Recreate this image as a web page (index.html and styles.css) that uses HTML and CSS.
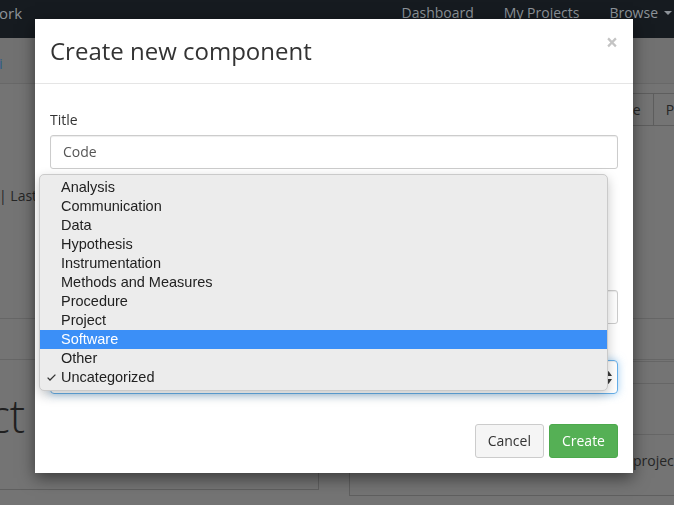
FILE: index.html
```html
<!DOCTYPE html>
<html lang="en">
<head>
<meta charset="utf-8">
<title>Create new component</title>
<link rel="stylesheet" href="styles.css">
</head>
<body>
<div class="page">
  <header class="navbar">
    <span class="brand">ork</span>
    <nav class="nav">
      <a class="nav-link">Dashboard</a>
      <a class="nav-link">My Projects</a>
      <a class="nav-link dd">Browse<span class="caret"></span></a>
    </nav>
  </header>
  <div class="subnav"><span class="sublink">i</span></div>
  <main class="main">
    <div class="tabs"><span class="tab">Source</span><span class="tab">Public</span></div>
    <div class="meta">| Last</div>
    <div class="band"></div>
    <div class="panels">
      <section class="panel-left"><div class="big">ct</div></section>
      <section class="panel-right">
        <div class="pr-head"></div>
        <div class="pr-sec"></div>
        <div class="pr-body">projec</div>
      </section>
    </div>
  </main>
</div>

<div class="modal-layer">
  <div class="modal">
    <div class="modal-header">
      <h4 class="modal-title">Create new component</h4>
      <span class="close">×</span>
    </div>
    <div class="modal-body">
      <div class="group">
        <label class="label">Title</label>
        <div class="input">Code</div>
      </div>
      <div class="group group-2"></div>
      <div class="group">
        <div class="label-space"></div>
        <div class="input"></div>
      </div>
      <div class="group group-4">
        <div class="label-space"></div>
        <div class="select">
          <svg class="arrows" width="7" height="13" viewBox="0 0 7 13"><path d="M0 5 L3.5 0 L7 5 Z M0 8 L3.5 13 L7 8 Z" fill="#3a3a3a"/></svg>
        </div>
      </div>
    </div>
    <div class="modal-footer">
      <span class="btn btn-default">Cancel</span>
      <span class="btn btn-success">Create</span>
    </div>

    <ul class="dropdown">
      <li class="opt">Analysis</li>
      <li class="opt">Communication</li>
      <li class="opt">Data</li>
      <li class="opt">Hypothesis</li>
      <li class="opt">Instrumentation</li>
      <li class="opt">Methods and Measures</li>
      <li class="opt">Procedure</li>
      <li class="opt">Project</li>
      <li class="opt sel">Software</li>
      <li class="opt">Other</li>
      <li class="opt checked"><svg class="check" width="9" height="7" viewBox="0 0 9 7"><polyline points="0.6,3.6 3,6 8.4,0.6" fill="none" stroke="#333" stroke-width="1.3"/></svg>Uncategorized</li>
    </ul>
  </div>
</div>
</body>
</html>
```

FILE: styles.css
```css
html, body {
  margin: 0;
  padding: 0;
}
body {
  width: 674px;
  height: 505px;
  overflow: hidden;
  background: #747474;
  font-family: "Open Sans", "Liberation Sans", sans-serif;
  position: relative;
}

/* ---------- dimmed background page ---------- */
.page {
  width: 674px;
}
.navbar {
  height: 38px;
  background: #161b20;
  display: flex;
  align-items: flex-start;
  color: #8d9399;
  font-size: 14px;
}
.brand {
  font-size: 15px;
  line-height: 26px;
  margin-left: -1px;
}
.nav {
  margin-left: auto;
  display: flex;
}
.nav-link {
  padding: 0 15px;
  line-height: 26px;
}
.nav-link.dd {
  padding-right: 2px;
  display: flex;
  align-items: center;
}
.caret {
  display: inline-block;
  width: 0;
  height: 0;
  margin-left: 6px;
  border-left: 4px solid transparent;
  border-right: 4px solid transparent;
  border-top: 4px solid #8d9399;
}
.subnav {
  background: #717171;
  border-bottom: 1px solid #686868;
  box-sizing: border-box;
  height: 46px;
  padding-top: 14px;
}
.sublink {
  color: #2f5d88;
  font-size: 15px;
  line-height: 20px;
  margin-left: -1px;
}
.main {
  color: #262626;
}
.tabs {
  display: flex;
  justify-content: flex-end;
  margin-top: 9px;
  margin-right: -44px;
}
.tab {
  height: 33px;
  box-sizing: border-box;
  border: 1px solid #5e5e5e;
  padding: 0 12px;
  line-height: 31px;
  font-size: 14px;
}
.tab + .tab {
  border-left: none;
}
.meta {
  margin-top: 60px;
  font-size: 14px;
  line-height: 20px;
  margin-left: -1px;
}
.band {
  margin-top: 112px;
  height: 40px;
  border-top: 1px solid #666;
  border-bottom: 1px solid #666;
}
.panels {
  display: flex;
}
.panel-left {
  width: 319px;
  height: 129px;
  margin-left: -1px;
  border-right: 1px solid #5f5f5f;
  border-bottom: 1px solid #5f5f5f;
  overflow: hidden;
}
.big {
  margin-top: 25px;
  font-size: 46px;
  font-weight: 300;
  line-height: 60px;
  margin-left: -11px;
  color: #202020;
}
.panel-right {
  margin-left: 30px;
  flex: 1;
  margin-top: 1px;
  border-left: 1px solid #5f5f5f;
  border-top: 1px solid #666;
  border-bottom: 1px solid #5f5f5f;
}
.pr-head {
  height: 21px;
  border-bottom: 1px solid #666;
}
.pr-sec {
  height: 50px;
  border-bottom: 1px solid #666;
}
.pr-body {
  padding: 16px 0 24px 283px;
  font-size: 14px;
  line-height: 20px;
  white-space: nowrap;
}

/* ---------- modal ---------- */
.modal-layer {
  position: fixed;
  inset: 0;
  padding: 19px 0 0 35px;
}
.modal {
  position: relative;
  width: 598px;
  background: #fff;
  box-shadow: 0 5px 15px rgba(0, 0, 0, 0.5);
  color: #333;
}
.modal-header {
  padding: 15px;
  border-bottom: 1px solid #e5e5e5;
  display: flex;
  justify-content: space-between;
  align-items: flex-start;
}
.modal-title {
  margin: 0;
  font-size: 24px;
  font-weight: 400;
  line-height: 34px;
  color: #333;
}
.close {
  font-size: 21px;
  font-weight: 700;
  line-height: 1;
  color: #c4c4c4;
  margin-top: -2px;
}
.modal-body {
  padding: 26px 15px 15px;
}
.group + .group {
  margin-top: 15px;
}
.group-2 {
  height: 66px;
}
.group-4.group {
  margin-top: 11px;
}
.label {
  display: block;
  font-size: 14px;
  line-height: 20px;
  margin-bottom: 5px;
  color: #333;
}
.label-space {
  height: 20px;
  margin-bottom: 5px;
}
.input {
  height: 34px;
  box-sizing: border-box;
  border: 1px solid #ccc;
  border-radius: 3px;
  padding: 0 12px;
  line-height: 32px;
  font-size: 14px;
  color: #555;
  box-shadow: inset 0 1px 1px rgba(0, 0, 0, 0.075);
}
.select {
  height: 34px;
  box-sizing: border-box;
  border: 1px solid #66afe9;
  border-radius: 4px;
  padding: 0 4px 0 12px;
  display: flex;
  align-items: center;
  justify-content: flex-end;
  box-shadow: inset 0 1px 1px rgba(0, 0, 0, 0.075), 0 0 8px rgba(102, 175, 233, 0.6);
}
.arrows {
  margin-right: 1px;
}
.modal-footer {
  padding: 15px;
  display: flex;
  justify-content: flex-end;
  gap: 5px;
}
.btn {
  height: 34px;
  box-sizing: border-box;
  padding: 0 12px;
  border: 1px solid #ccc;
  border-radius: 3px;
  font-size: 14px;
  line-height: 32px;
}
.btn-default {
  background: #f5f5f5;
  color: #333;
}
.btn-success {
  background: #55b055;
  border-color: #4ca94c;
  color: #fff;
}

/* ---------- native select popup ---------- */
.dropdown {
  position: absolute;
  left: 4px;
  top: 155px;
  width: 569px;
  box-sizing: border-box;
  margin: 0;
  padding: 3px 0;
  list-style: none;
  background: #ececec;
  border: 1px solid #cacaca;
  border-radius: 5px;
  box-shadow: 0 4px 12px rgba(0, 0, 0, 0.22);
  font-family: "Liberation Sans", Arial, sans-serif;
  font-size: 14.5px;
}
.opt {
  height: 19px;
  line-height: 19px;
  padding-left: 21px;
  color: #222;
  display: flex;
  align-items: center;
}
.opt.sel {
  background: #3b8ff7;
  color: #fff;
}
.opt.checked {
  padding-left: 7px;
}
.check {
  margin-right: 5px;
}
```
